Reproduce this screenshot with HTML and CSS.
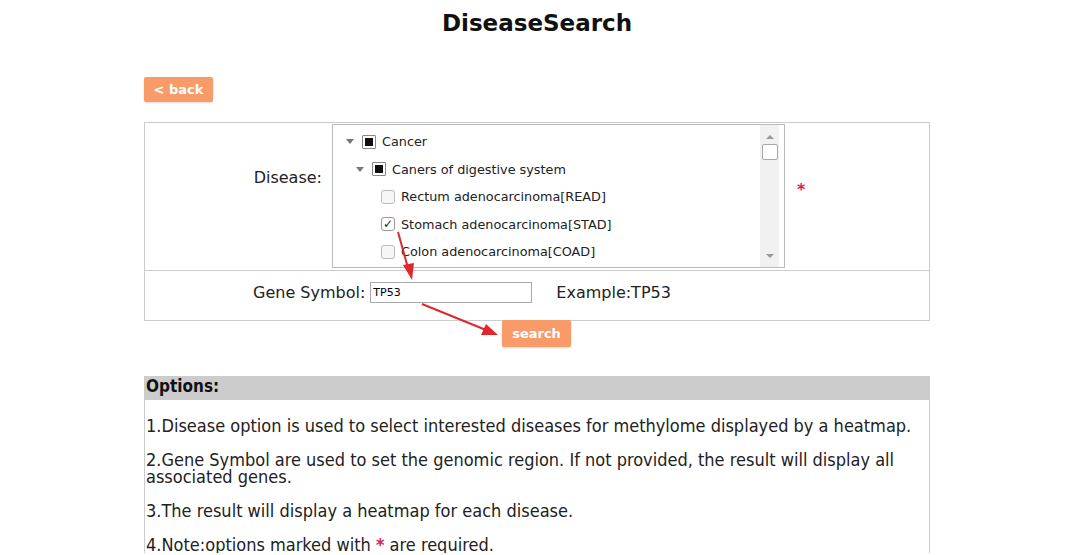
FILE: index.html
```html
<!DOCTYPE html>
<html lang="en">
  <head>
    <meta charset="UTF-8" />
    <title>DiseaseSearch</title>
    <link rel="stylesheet" href="styles.css">
  </head>
  <body>
    <div class="page">
      <h1 class="title">DiseaseSearch</h1>
      <div class="back-row">
        <button class="btn back-btn">&lt; back</button>
      </div>

      <div class="search-form">
        <table class="form-table">
          <tr class="disease-row">
            <td class="label-cell">Disease:</td>
            <td class="tree-cell">
              <div class="tree-wrap">
                <div class="tree-box">
                  <ul class="tree">
                    <li class="lvl1"><span class="caret"></span><span class="cb cb-part"></span>Cancer</li>
                    <li class="lvl2"><span class="caret"></span><span class="cb cb-part"></span>Caners of digestive system</li>
                    <li class="lvl3"><span class="cb"></span>Rectum adenocarcinoma[READ]</li>
                    <li class="lvl3"><span class="cb cb-checked">&#10003;</span>Stomach adenocarcinoma[STAD]</li>
                    <li class="lvl3"><span class="cb"></span>Colon adenocarcinoma[COAD]</li>
                  </ul>
                  <div class="scrollbar">
                    <span class="arrow-up"></span>
                    <span class="thumb"></span>
                    <span class="arrow-down"></span>
                  </div>
                </div>
                <span class="required">*</span>
              </div>
            </td>
          </tr>
          <tr class="gene-row">
            <td colspan="2">
              <div class="gene-wrap">
                <label class="gene-label" for="gene">Gene Symbol:</label>
                <input type="text" id="gene" class="gene-input" value="TP53" />
                <span class="example">Example:TP53</span>
              </div>
            </td>
          </tr>
        </table>
        <div class="search-row">
          <button class="btn search-btn">search</button>
        </div>

        <svg class="arrows" width="786" height="240" viewBox="0 0 786 240">
          <line x1="254" y1="110" x2="264" y2="146" stroke="#e0282c" stroke-width="2" />
          <polygon points="268,158 259,143 270,141" fill="#e0282c" />
          <line x1="278" y1="182" x2="342" y2="208" stroke="#e0282c" stroke-width="2" />
          <polygon points="354,213 337,213 342,202" fill="#e0282c" />
        </svg>
      </div>

      <div class="options">
        <div class="options-head">Options:</div>
        <div class="options-body">
          <p>1.Disease option is used to select interested diseases for methylome displayed by a heatmap.</p>
          <p>2.Gene Symbol are used to set the genomic region. If not provided, the result will display all associated genes.</p>
          <p>3.The result will display a heatmap for each disease.</p>
          <p>4.Note:options marked with <span class="star">*</span> are required.</p>
        </div>
      </div>
    </div>
  </body>
</html>
```

FILE: styles.css
```css
body {
  margin: 0;
  background-color: #fff;
  font-family: "DejaVu Sans", Verdana, sans-serif;
  color: #222;
}

.page {
  width: 786px;
  margin-left: 144px;
}

.title {
  margin: 0;
  padding-top: 10px;
  height: 50px;
  font-size: 23px;
  text-align: center;
  color: #111;
}

.back-row {
  height: 45px;
  padding-top: 17px;
}

.btn {
  border: none;
  border-radius: 2px;
  background-color: #f99b68;
  color: #fff;
  font-family: Verdana, "DejaVu Sans", sans-serif;
  font-weight: bold;
  font-size: 13px;
  cursor: pointer;
  box-shadow: 0 1px 2px rgba(0, 0, 0, 0.15);
}

.back-btn {
  width: 69px;
  height: 25px;
}

.search-form {
  position: relative;
}

.form-table {
  width: 786px;
  border-collapse: collapse;
  border: 1px solid #ccc;
}

.form-table td {
  padding: 0;
}

.disease-row {
  height: 148px;
}

.disease-row td {
  border-bottom: 1px solid #ccc;
  vertical-align: top;
}

.label-cell {
  width: 177px;
  text-align: right;
  font-size: 16px;
  padding: 45px 10px 0 0 !important;
}

.tree-wrap {
  display: flex;
  align-items: flex-start;
  padding-top: 1px;
}

.tree-box {
  width: 451px;
  height: 142px;
  border: 1px solid #bbb;
  display: flex;
  justify-content: space-between;
  overflow: hidden;
}

.tree {
  list-style: none;
  margin: 0;
  padding: 3px 0 0;
  font-size: 12.8px;
  color: #222;
}

.tree li {
  height: 27.5px;
  display: flex;
  align-items: center;
}

.lvl1 { padding-left: 13px; }
.lvl2 { padding-left: 23px; }
.lvl3 { padding-left: 48px; }

.caret {
  width: 0;
  height: 0;
  border-left: 4px solid transparent;
  border-right: 4px solid transparent;
  border-top: 5px solid #777;
  margin-right: 8px;
}

.cb {
  width: 12px;
  height: 12px;
  border: 1px solid #bbb;
  border-radius: 3px;
  background: #f6f6f6;
  margin-right: 6px;
  display: inline-flex;
  align-items: center;
  justify-content: center;
  box-sizing: content-box;
  font-size: 12px;
  line-height: 1;
  color: #222;
}

.cb-part {
  border-color: #888;
  border-radius: 1px;
  background: #fff;
}

.cb-part::after {
  content: "";
  width: 8px;
  height: 8px;
  background: #111;
}

.cb-checked {
  background: #fff;
  border-color: #999;
}

.scrollbar {
  width: 19px;
  margin-right: 5px;
  background: #f1f1f1;
  display: flex;
  flex-direction: column;
  align-items: center;
}

.arrow-up,
.arrow-down {
  width: 0;
  height: 0;
  border-left: 4px solid transparent;
  border-right: 4px solid transparent;
}

.arrow-up {
  border-bottom: 4px solid #999;
  margin-top: 10px;
}

.thumb {
  width: 14px;
  height: 14px;
  margin-top: 5px;
  border: 1px solid #aaa;
  border-radius: 2px;
  background: #fff;
}

.arrow-down {
  border-top: 4px solid #999;
  margin-top: auto;
  margin-bottom: 9px;
}

.required {
  color: #d9214a;
  font-size: 16px;
  font-weight: bold;
  margin-left: 12px;
  margin-top: 56px;
}

.gene-row {
  height: 50px;
}

.gene-row td {
  vertical-align: top;
}

.gene-wrap {
  display: flex;
  align-items: center;
  padding: 11px 0 0 108px;
  font-size: 16px;
}

.gene-label {
  margin-right: 5px;
}

.gene-input {
  width: 156px;
  height: 17px;
  border: 1px solid #aaa;
  padding: 1px 2px;
  font-family: Verdana, "DejaVu Sans", sans-serif;
  font-size: 11px;
}

.example {
  margin-left: 24px;
}

.search-row {
  padding-left: 358px;
  margin-top: -1px;
  height: 28px;
}

.search-btn {
  width: 69px;
  height: 27px;
}

.arrows {
  position: absolute;
  left: 0;
  top: 0;
  pointer-events: none;
}

.options {
  margin-top: 28px;
  border-left: 1px solid #ccc;
  border-right: 1px solid #ccc;
}

.options-head {
  background-color: #cccccc;
  height: 24px;
  line-height: 20px;
  font-family: "DejaVu Sans Condensed", "DejaVu Sans", sans-serif;
  font-weight: bold;
  font-size: 17px;
  color: #111;
  padding-left: 1px;
}

.options-body {
  padding: 0 0 0 1px;
  font-family: "DejaVu Sans Condensed", "DejaVu Sans", sans-serif;
  font-size: 18px;
  line-height: 17px;
  color: #222;
}

.options-body p {
  margin: 0;
  padding-top: 17px;
}

.options-body p + p {
  padding-top: 17px;
}

.star {
  color: #d9214a;
  font-weight: bold;
}
```
